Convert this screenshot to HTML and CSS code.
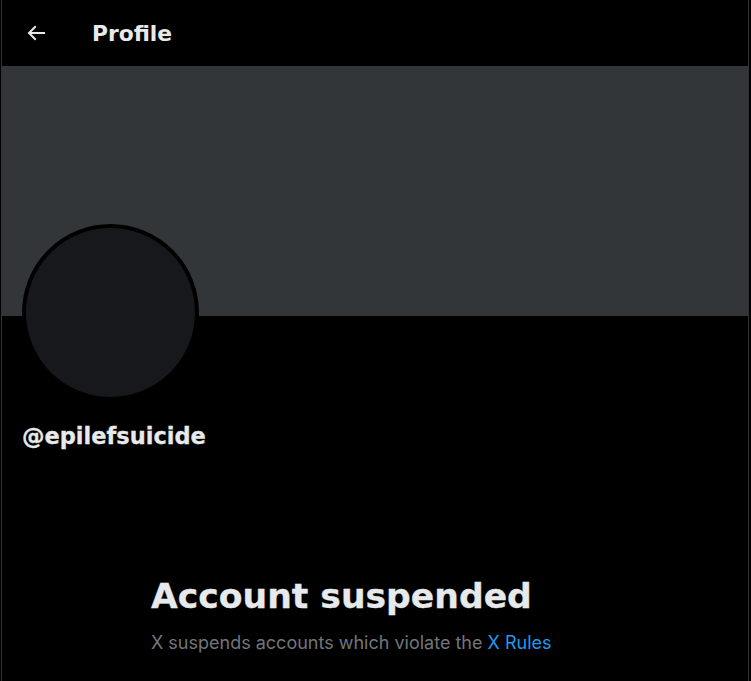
FILE: index.html
```html
<!DOCTYPE html>
<html lang="en">
<head>
<meta charset="utf-8">
<title>Profile</title>
<link rel="stylesheet" href="styles.css">
</head>
<body>
<div class="column">
  <header class="topbar">
    <button class="back" aria-label="Back">
      <svg viewBox="0 0 24 24" width="24" height="24"><path d="M7.414 13l5.043 5.04-1.414 1.42L3.586 12l7.457-7.46 1.414 1.42L7.414 11H21v2H7.414z" fill="#e7e9ea"/></svg>
    </button>
    <h1 class="title">Profile</h1>
  </header>
  <div class="banner"></div>
  <div class="profile">
    <div class="avatar"></div>
    <div class="handle">@epilefsuicide</div>
  </div>
  <div class="empty">
    <h2 class="empty-title">Account suspended</h2>
    <p class="empty-text">X suspends accounts which violate the <a href="#" class="link">X Rules</a></p>
  </div>
</div>
</body>
</html>
```
FILE: styles.css
```css
html, body {
  margin: 0;
  padding: 0;
  background: #000;
  height: 100%;
}
body {
  font-family: Inter, "Noto Sans", sans-serif;
  color: #e7e9ea;
  overflow: hidden;
}
.column {
  margin-left: 1px;
  width: 748px;
  min-height: 100%;
  border-left: 1px solid #2f3336;
  border-right: 1px solid #2f3336;
  box-sizing: border-box;
}
.topbar {
  height: 66px;
  display: flex;
  align-items: center;
  padding-left: 22px;
  box-sizing: border-box;
}
.back {
  background: none;
  border: 0;
  padding: 0;
  width: 24px;
  height: 24px;
  display: flex;
  margin-right: 44px;
}
.title {
  margin: 0;
  font-family: "DejaVu Sans", sans-serif;
  font-size: 21.8px;
  font-weight: 700;
  letter-spacing: 0;
}
.banner {
  height: 250px;
  background: #333639;
}
.profile {
  padding-left: 20px;
}
.avatar {
  width: 169px;
  height: 169px;
  border-radius: 50%;
  background: #16181c;
  border: 4px solid #000;
  margin-top: -92px;
}
.handle {
  margin-top: 22px;
  font-family: "DejaVu Sans", sans-serif;
  font-size: 22.5px;
  font-weight: 700;
  padding-left: 0;
  -webkit-text-stroke: 0.3px #e7e9ea;
}
.empty {
  padding: 127px 0 0 149px;
}
.empty-title {
  margin: 0;
  font-family: "DejaVu Sans", sans-serif;
  font-size: 34.6px;
  font-weight: 700;
  line-height: 40px;
  -webkit-text-stroke: 0.3px #e7e9ea;
}
.empty-text {
  margin: 16px 0 0;
  font-size: 18px;
  color: #71767b;
}
.link {
  color: #1d9bf0;
  text-decoration: none;
}
```
